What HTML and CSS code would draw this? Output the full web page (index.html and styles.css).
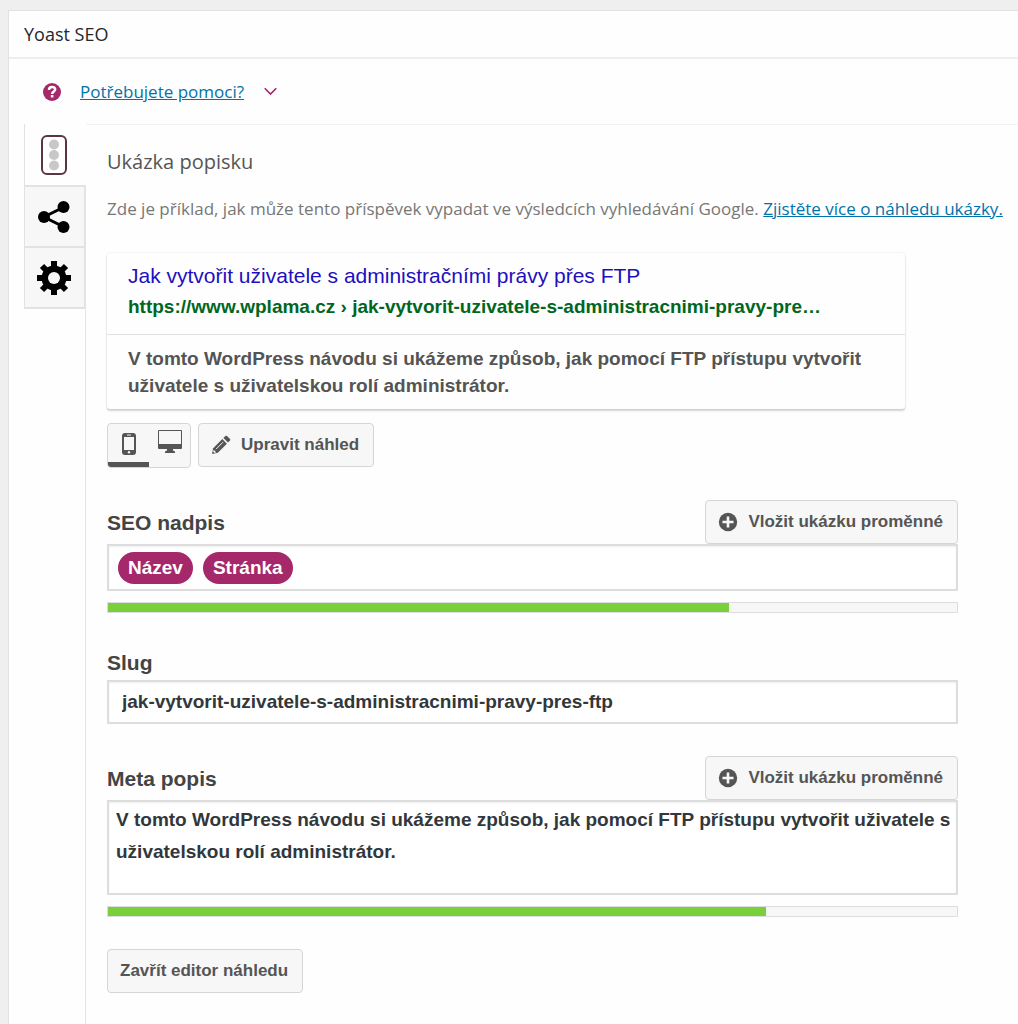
FILE: index.html
```html
<!DOCTYPE html>
<html lang="cs">
<head>
    <meta charset="UTF-8">
    <meta name="viewport" content="width=device-width, initial-scale=1.0">
    <title>Yoast SEO</title>
    <link rel="stylesheet" href="styles.css">
</head>
<body>
    <div class="postbox">
        <h2 class="postbox-title">Yoast SEO</h2>

        <!-- Help link -->
        <div class="help">
            <svg class="help-icon" viewBox="0 0 20 20" aria-hidden="true">
                <circle cx="10" cy="10" r="10" fill="#a4286a"/>
                <path d="M6.6 7.6C6.7 5.4 8.2 4.4 10.1 4.4C12.1 4.4 13.5 5.5 13.5 7.3C13.5 9.6 10.2 9.4 10.2 12.2" fill="none" stroke="#fff" stroke-width="2.8"/>
                <rect x="8.7" y="13.4" width="2.9" height="2.7" fill="#fff"/>
            </svg>
            <a href="#help">Potřebujete pomoci?</a>
            <svg class="help-arrow" viewBox="0 0 12 8" aria-hidden="true">
                <path d="M0.7 1L6 6.4L11.3 1" fill="none" stroke="#a4286a" stroke-width="1.5"/>
            </svg>
        </div>

        <div class="main">
            <!-- Side tabs -->
            <nav class="tabs">
                <button type="button" class="tab active" aria-label="SEO">
                    <svg width="26" height="40" viewBox="0 0 26 40">
                        <rect x="1" y="1" width="24" height="38" rx="5" fill="#fff" stroke="#5d3542" stroke-width="2"/>
                        <circle cx="13" cy="9.5" r="5" fill="#c8c8c8"/>
                        <circle cx="13" cy="20" r="5" fill="#c8c8c8"/>
                        <circle cx="13" cy="30.5" r="5" fill="#c8c8c8"/>
                    </svg>
                </button>
                <button type="button" class="tab" aria-label="Sociální sítě">
                    <svg width="32" height="32" viewBox="0 0 32 32">
                        <path d="M26 6L6 16L26 26" fill="none" stroke="#000" stroke-width="3"/>
                        <circle cx="25.5" cy="6" r="6"/>
                        <circle cx="6" cy="16" r="6"/>
                        <circle cx="25.5" cy="26" r="6"/>
                    </svg>
                </button>
                <button type="button" class="tab" aria-label="Pokročilé">
                    <svg width="34" height="34" viewBox="0 0 34 34">
                        <g stroke="#000" stroke-width="6">
                            <path d="M17 0V34M0 17H34M5 5L29 29M29 5L5 29"/>
                        </g>
                        <circle cx="17" cy="17" r="12.5"/>
                        <circle cx="17" cy="17" r="6" fill="#f7f7f7"/>
                    </svg>
                </button>
            </nav>

            <div class="content">
                <h3 class="section-title">Ukázka popisku</h3>
                <p class="intro">Zde je příklad, jak může tento příspěvek vypadat ve výsledcích vyhledávání Google. <a href="#more">Zjistěte více o náhledu ukázky.</a></p>

                <!-- Google preview -->
                <div class="preview">
                    <div class="preview-head">
                        <div class="preview-title">Jak vytvořit uživatele s administračními právy přes FTP</div>
                        <div class="preview-url">https://www.wplama.cz › jak-vytvorit-uzivatele-s-administracnimi-pravy-pre…</div>
                    </div>
                    <div class="preview-desc">V tomto WordPress návodu si ukážeme způsob, jak pomocí FTP přístupu vytvořit uživatele s uživatelskou rolí administrátor.</div>
                </div>

                <div class="toolbar">
                    <div class="switcher">
                        <button type="button" class="active" aria-label="Náhled pro mobily">
                            <svg width="14" height="22" viewBox="0 0 14 22">
                                <rect width="14" height="22" rx="3" fill="#555"/>
                                <rect x="2" y="4" width="10" height="13" fill="#f7f7f7"/>
                                <rect x="5" y="1.5" width="4" height="1" fill="#f7f7f7"/>
                                <circle cx="7" cy="19.3" r="1.2" fill="#f7f7f7"/>
                            </svg>
                        </button>
                        <button type="button" aria-label="Náhled pro počítače">
                            <svg width="26" height="26" viewBox="0 0 26 26">
                                <rect x="1" y="1" width="24" height="19" rx="1" fill="#555"/>
                                <rect x="2" y="2" width="22" height="13" fill="#f7f7f7"/>
                                <path d="M10 20H16V21.5L18 22.5V24H8V22.5L10 21.5Z" fill="#555"/>
                            </svg>
                        </button>
                    </div>
                    <button type="button" class="button">
                        <svg width="20" height="20" viewBox="0 0 20 20" aria-hidden="true">
                            <path d="M1 19L2.2 13.2L11.3 4.1L15.9 8.7L6.8 17.8Z" fill="#555"/>
                            <path d="M12.4 3L14.4 1Q15.2 0.3 16 1L19 4Q19.7 4.8 19 5.6L17 7.6Z" fill="#555"/>
                            <path d="M5 14.2L12 7.2" stroke="#f7f7f7" stroke-width="1"/>
                            <path d="M2.4 15.6L4.4 17.6" stroke="#f7f7f7" stroke-width="1.5"/>
                        </svg>
                        Upravit náhled
                    </button>
                </div>

                <!-- Snippet editor -->
                <form class="editor">
                    <div class="field">
                        <div class="field-head">
                            <span class="label" id="titleLabel">SEO nadpis</span>
                            <button type="button" class="button">
                                <svg width="20" height="20" viewBox="0 0 20 20" aria-hidden="true">
                                    <circle cx="10" cy="10" r="9.2" fill="#555"/>
                                    <path d="M10 4.5V15.5M4.5 10H15.5" stroke="#f7f7f7" stroke-width="2.6"/>
                                </svg>
                                Vložit ukázku proměnné
                            </button>
                        </div>
                        <div class="input tags" role="textbox" contenteditable="true" spellcheck="false" aria-labelledby="titleLabel"><span class="tag" contenteditable="false">Název</span><span class="tag" contenteditable="false">Stránka</span></div>
                        <progress class="bar" value="621" max="849" aria-label="Délka nadpisu"></progress>
                    </div>

                    <div class="field">
                        <label class="label" for="slug">Slug</label>
                        <input class="input slug" type="text" id="slug" spellcheck="false" value="jak-vytvorit-uzivatele-s-administracnimi-pravy-pres-ftp">
                    </div>

                    <div class="field">
                        <div class="field-head">
                            <label class="label" for="meta">Meta popis</label>
                            <button type="button" class="button">
                                <svg width="20" height="20" viewBox="0 0 20 20" aria-hidden="true">
                                    <circle cx="10" cy="10" r="9.2" fill="#555"/>
                                    <path d="M10 4.5V15.5M4.5 10H15.5" stroke="#f7f7f7" stroke-width="2.6"/>
                                </svg>
                                Vložit ukázku proměnné
                            </button>
                        </div>
                        <textarea class="input meta" id="meta" spellcheck="false">V tomto WordPress návodu si ukážeme způsob, jak pomocí FTP přístupu vytvořit uživatele s uživatelskou rolí administrátor.</textarea>
                        <progress class="bar" value="658" max="849" aria-label="Délka popisu"></progress>
                    </div>

                    <button type="button" class="button">Zavřít editor náhledu</button>
                </form>
            </div>
        </div>
    </div>
</body>
</html>
```

FILE: styles.css
```css
* {
    box-sizing: border-box;
}

body {
    margin: 0;
    padding: 10px 0 0 8px;
    background-color: #efefef;
    color: #32373c;
    font-family: "Open Sans", "Noto Sans", sans-serif;
    font-size: 17px;
}

a {
    color: #0073aa;
}

button {
    font-family: "Liberation Sans", Arial, sans-serif;
    cursor: pointer;
}

/* Box */
.postbox {
    display: flex;
    flex-direction: column;
    min-height: calc(100vh - 10px);
    background-color: #fefefe;
    border-top: 1px solid #e2e2e2;
    border-left: 1px solid #e2e2e2;
}

.postbox-title {
    margin: 0;
    padding: 0 15px;
    border-bottom: 2px solid #eee;
    color: #23282d;
    font-size: 18px;
    font-weight: 500;
    line-height: 46px;
}

.help {
    display: flex;
    align-items: center;
    height: 65px;
    padding: 0 34px;
    font-weight: 500;
}

.help-icon {
    width: 18px;
    height: 18px;
    margin-right: 19px;
}

.help-arrow {
    width: 13px;
    height: 9px;
    margin-left: 20px;
}

.main {
    display: flex;
    flex: 1;
    margin-left: 15px;
}

/* Tabs */
.tabs {
    width: 62px;
    flex-shrink: 0;
    border-right: 1px solid #e5e5e5;
}

.tab {
    display: flex;
    align-items: center;
    justify-content: center;
    width: 61px;
    height: 61px;
    padding: 0 1px 0 0;
    border: 1px solid #e2e2e2;
    border-width: 0 1px 2px;
    background-color: #f7f7f7;
}

.tab.active {
    width: 62px;
    height: 63px;
    padding-right: 3px;
    border-right: 0;
    background-color: #fefefe;
}

/* Content */
.content {
    flex: 1;
    min-width: 0;
    padding: 21px 8px 30px 21px;
    border-top: 1px solid #f2f2f2;
}

.section-title {
    margin: 0;
    color: #555;
    font-size: 20px;
    font-weight: 400;
    line-height: 32px;
}

.intro {
    margin: 19px 0 32px;
    color: #777;
    font-weight: 500;
    line-height: 24px;
    white-space: nowrap;
}

.preview {
    max-width: 798px;
    border-radius: 3px;
    box-shadow: 0 2px 2px rgba(0, 0, 0, 0.16), 0 0 2px rgba(0, 0, 0, 0.14);
    font-family: "Liberation Sans", Arial, sans-serif;
    font-size: 19px;
    font-weight: bold;
}

.preview-head {
    padding: 8px 21px 11px;
    border-bottom: 1px solid #e2e2e2;
}

.preview-title {
    color: #1e0fbe;
    font-size: 21px;
    font-weight: normal;
    line-height: 30px;
}

.preview-url {
    color: #006621;
    line-height: 32px;
}

.preview-desc {
    padding: 10px 21px;
    color: #545454;
    line-height: 27px;
}

.toolbar {
    display: flex;
    gap: 7px;
    margin-top: 14px;
}

.switcher {
    display: flex;
    height: 45px;
    border: 1px solid #d5d5d5;
    border-radius: 4px;
    background-color: #f7f7f7;
    overflow: hidden;
}

.switcher button {
    width: 41px;
    padding: 0;
    border: 0;
    border-bottom: 5px solid transparent;
    background: none;
}

.switcher button.active {
    padding-top: 4px;
    border-bottom-color: #555;
}

.button {
    display: inline-flex;
    align-items: center;
    gap: 10px;
    height: 44px;
    padding: 0 14px 0 12px;
    border: 1px solid #d5d5d5;
    border-radius: 4px;
    background-color: #f7f7f7;
    color: #555;
    font-size: 17px;
    font-weight: bold;
}

/* Editor */
.editor {
    max-width: 851px;
    margin-top: 32px;
    font-family: "Liberation Sans", Arial, sans-serif;
}

.field {
    margin-bottom: 32px;
}

.field-head {
    display: flex;
    align-items: center;
    justify-content: space-between;
}

.label {
    display: block;
    color: #444;
    font-size: 21px;
    font-weight: bold;
    line-height: 35px;
}

.input {
    display: block;
    width: 100%;
    border: 2px solid #ddd;
    background-color: #fff;
    box-shadow: inset 0 1px 2px rgba(0, 0, 0, 0.07);
    color: #32373c;
    font-family: "Liberation Sans", Arial, sans-serif;
    font-size: 19px;
    font-weight: bold;
}

.tags {
    display: flex;
    gap: 10px;
    height: 47px;
    padding: 6px 9px;
}

.tag {
    height: 32px;
    padding: 0 10px;
    border-radius: 16px;
    background-color: #a4286a;
    color: #fff;
    line-height: 32px;
}

.slug {
    height: 44px;
    padding: 0 13px;
}

.meta {
    height: 95px;
    padding: 2px 0 2px 7px;
    line-height: 32px;
    resize: none;
}

.bar {
    display: block;
    width: 100%;
    height: 11px;
    margin-top: 11px;
    border: 1px solid #ddd;
    background-color: #f7f7f7;
    appearance: none;
}

.bar::-webkit-progress-bar {
    background-color: #f7f7f7;
}

.bar::-webkit-progress-value {
    background-color: #7ad03a;
}
```
